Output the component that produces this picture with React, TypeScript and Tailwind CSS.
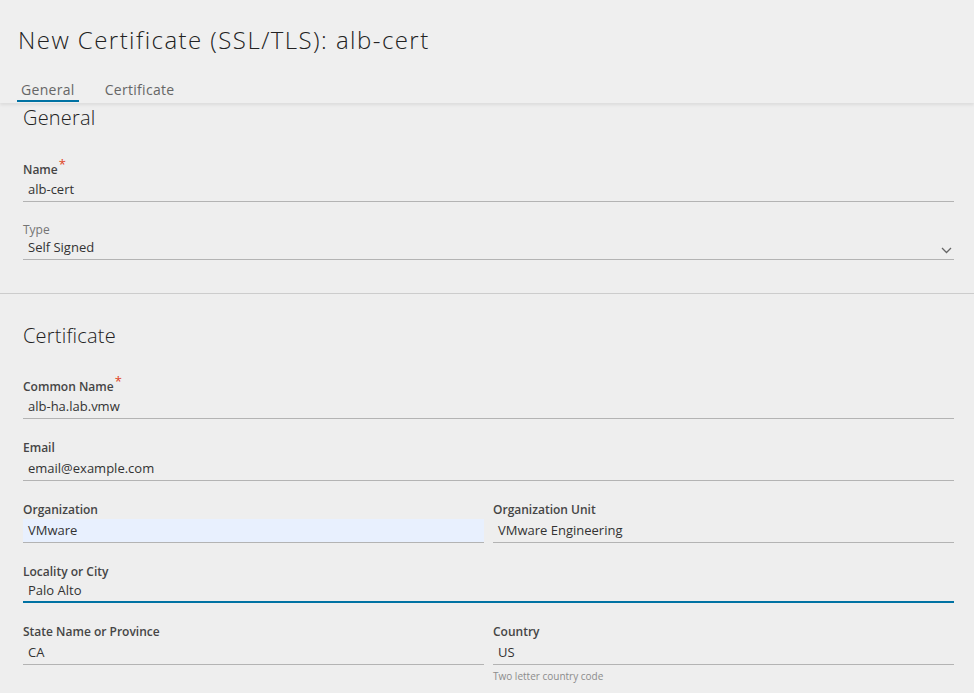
import type { ReactNode } from "react"

const font = { fontFamily: "'Open Sans', 'Noto Sans', sans-serif" }

function Label({ children, required, muted }: { children: ReactNode; required?: boolean; muted?: boolean }) {
    return (
        <div
            className={
                muted
                    ? "h-[18px] text-[12px] leading-[18px] text-[#747474]"
                    : "h-[18px] text-[12px] leading-[18px] font-semibold text-[#454545]"
            }
        >
            {children}
            {required && <span className="relative -top-[5px] ml-px text-[13px] font-normal text-[#e0421d]">*</span>}
        </div>
    )
}

function Field({
    label,
    value,
    required,
    muted,
    autofill,
    focused,
    select,
    helper,
}: {
    label: string
    value: string
    required?: boolean
    muted?: boolean
    autofill?: boolean
    focused?: boolean
    select?: boolean
    helper?: string
}) {
    return (
        <div>
            <Label required={required} muted={muted}>
                {label}
            </Label>
            <div
                className={
                    "flex items-center pl-[5px] pr-[2px] text-[13px] text-[#333] " +
                    (select ? "h-[21px] pb-[3px] " : focused ? "h-[22px] " : "h-[24px] ") +
                    (autofill ? "bg-[#e8f0fe] " : "") +
                    (focused ? "border-b-2 border-[#0072a3]" : "border-b border-[#b3b3b3]")
                }
            >
                <span className="flex-1">{value}</span>
                {select && (
                    <svg width="11" height="7" viewBox="0 0 11 7" className="mb-[-6px]">
                        <path d="M1 1 L5.5 5.5 L10 1" fill="none" stroke="#666" strokeWidth="1.3" />
                    </svg>
                )}
            </div>
            {helper && <div className="mt-[4px] text-[10px] leading-[14px] text-[#8c8c8c]">{helper}</div>}
        </div>
    )
}

export default function App() {
    return (
        <div className="h-[693px] overflow-hidden bg-[#eeeeee]" style={font}>
            <header className="relative z-10 bg-[#efefef] px-[18px] pt-6 pb-px shadow-[0_2px_3px_rgba(0,0,0,0.08)]">
                <h1 className="h-8 text-[24px] leading-8 font-light tracking-[1.45px] text-[#222]">
                    New Certificate (SSL/TLS): alb-cert
                </h1>
                <nav className="mt-[22px] flex gap-[22px] text-[14px] leading-5 tracking-[0.3px] text-[#666]">
                    <div className="-ml-px border-b-2 border-[#0072a3] px-1 pt-[2px]">General</div>
                    <div className="px-1 pt-[2px]">Certificate</div>
                </nav>
            </header>

            <section className="pl-[23px] pr-[20px]">
                <h2 className="mt-[3px] h-6 text-[20px] leading-6 font-light tracking-[0.2px] text-[#222]">General</h2>
                <div className="mt-[30px] flex flex-col gap-[19px]">
                    <Field label="Name" value="alb-cert" required />
                    <Field label="Type" value="Self Signed" muted select />
                </div>
            </section>

            <div className="mt-[33px] h-px bg-[#cccccc]" />

            <section className="pl-[23px] pr-[20px]">
                <h2 className="mt-[30px] h-6 text-[20px] leading-6 font-light tracking-[0.2px] text-[#222]">Certificate</h2>
                <div className="mt-[29px] flex flex-col gap-5">
                    <Field label="Common Name" value="alb-ha.lab.vmw" required />
                    <Field label="Email" value="email@example.com" />
                    <div className="grid grid-cols-2 gap-x-[9px]">
                        <Field label="Organization" value="VMware" autofill />
                        <Field label="Organization Unit" value="VMware Engineering" />
                    </div>
                    <Field label="Locality or City" value="Palo Alto" focused />
                    <div className="grid grid-cols-2 gap-x-[9px]">
                        <Field label="State Name or Province" value="CA" />
                        <Field label="Country" value="US" helper="Two letter country code" />
                    </div>
                </div>
            </section>
        </div>
    )
}
